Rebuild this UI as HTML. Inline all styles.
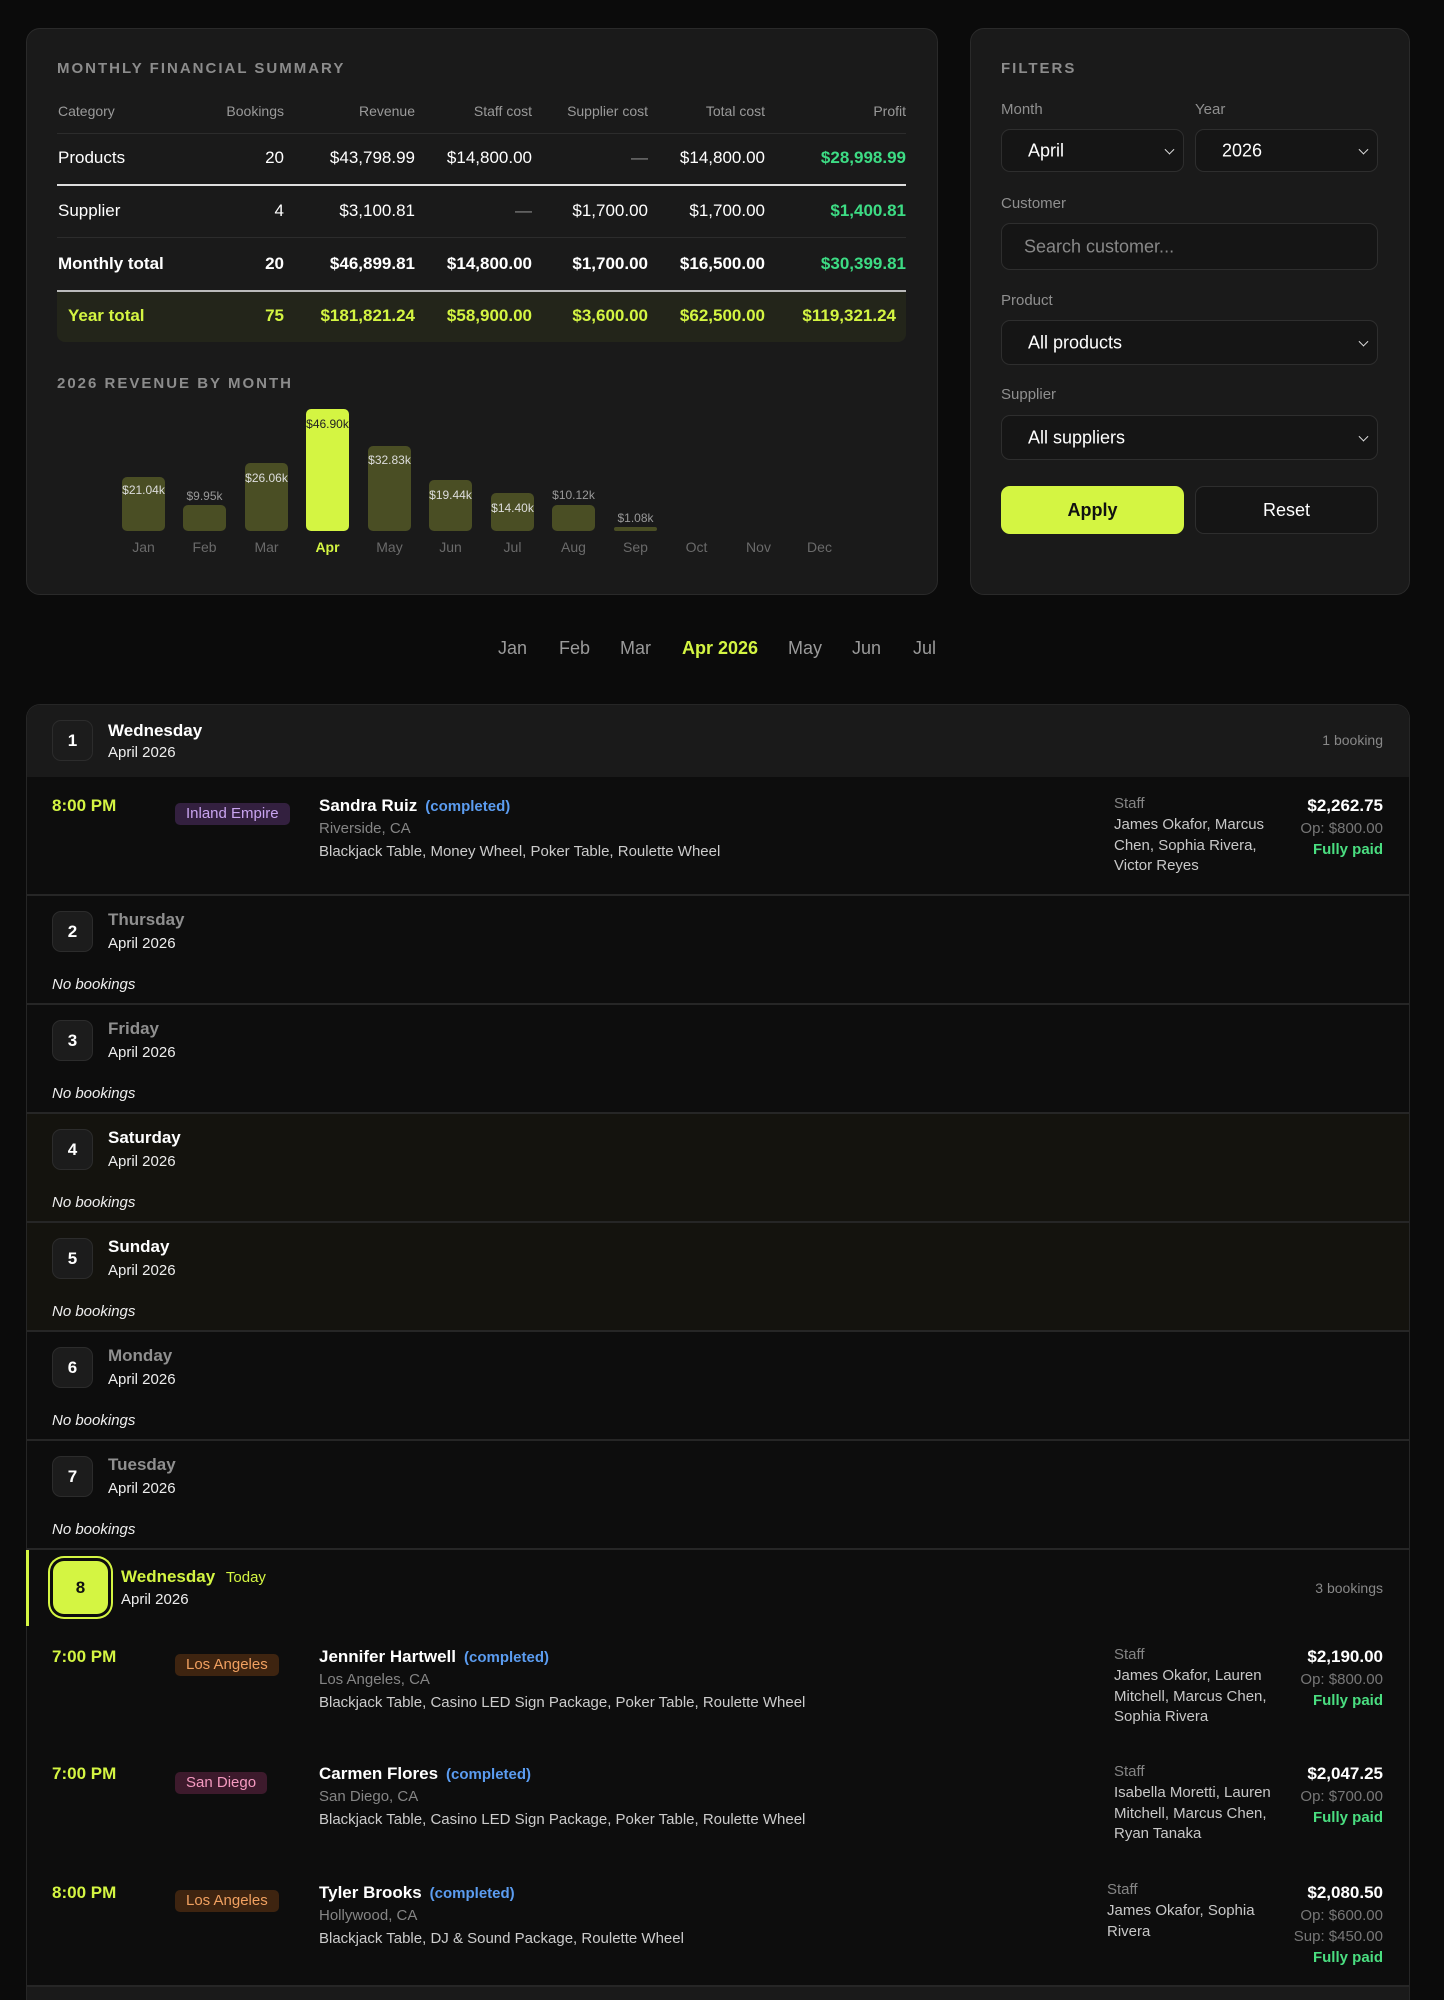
<!DOCTYPE html>
<html><head><meta charset="utf-8"><style>
*{margin:0;padding:0;box-sizing:border-box}
html{width:1444px;height:2000px;overflow:hidden;background:#0b0b0b}
body{width:1444px;height:2000px;background:#0b0b0b;font-family:"Liberation Sans",sans-serif;position:relative;overflow:hidden;color:#fff}
.a{position:absolute;white-space:nowrap;line-height:1.2}
.r{text-align:right}
.card{position:absolute;background:#1a1a1a;border:1px solid #2a2a2a;border-radius:14px}
.ttl{font-size:15px;font-weight:bold;letter-spacing:2px;color:#8c8c8c}
.th{font-size:14px;color:#9a9a9a}
.td{font-size:17px;color:#fff}
.b{font-weight:bold}
.g{color:#3ddc84}
.l{color:#d4f542}
.bar{position:absolute;width:43px;background:#4a4e24;border-radius:5px}
.bl{position:absolute;width:61px;text-align:center;font-size:12px;color:#ddd;line-height:1.2}
.ml{position:absolute;width:61px;text-align:center;font-size:14px;color:#6a6a6a;top:539px}
.flab{font-size:15px;color:#8f8f8f}
.inp{position:absolute;background:#151515;border:1px solid #2e2e2e;border-radius:9px;font-size:18px;color:#fff}
.inp span{position:absolute;left:26px;top:50%;transform:translateY(-50%)}
.chev{position:absolute;right:10px;top:50%;width:7px;height:7px;border-right:1.6px solid #ddd;border-bottom:1.6px solid #ddd;transform:translateY(-70%) rotate(45deg)}
.nav{font-size:18px;color:#9a9a9a}
.box{position:absolute;left:52px;width:41px;height:41px;background:#1c1c1c;border:1px solid #2c2c2c;border-radius:9px;font-size:17px;font-weight:bold;text-align:center;line-height:39px}
.wd{font-size:17px;font-weight:bold;left:108px}
.mo{font-size:15px;left:108px;color:#eee}
.nb{font-size:15px;font-style:italic;left:52px;color:#eee}
.div{position:absolute;left:27px;width:1382px;height:2px;background:#262626}
.time{font-size:17px;font-weight:bold;color:#d4f542;left:52px}
.badge{position:absolute;left:175px;height:22px;border-radius:5px;font-size:15px;line-height:22px;padding:0 11px}
.nm{font-size:17px;font-weight:bold;left:319px}
.nm i{font-style:normal;color:#5b9cf0;font-size:15px;margin-left:8px}
.loc{font-size:15px;color:#858585;left:319px}
.pr{font-size:15px;color:#ccc;left:319px}
.sl{font-size:15px;color:#858585}
.st{font-size:15px;color:#c8c8c8;line-height:20.5px}
.amt{font-size:17px;font-weight:bold;right:61px}
.op{font-size:15px;color:#777;right:61px}
.fp{font-size:15px;font-weight:bold;color:#4ade80;right:61px}
</style></head><body>

<!-- Summary card -->
<div class="card" style="left:26px;top:28px;width:912px;height:567px"></div>
<div class="a ttl" style="left:57px;top:60px">MONTHLY FINANCIAL SUMMARY</div>
<div class="a th" style="left:58px;top:103px">Category</div>
<div class="a th r" style="right:1160px;top:103px">Bookings</div>
<div class="a th r" style="right:1029px;top:103px">Revenue</div>
<div class="a th r" style="right:912px;top:103px">Staff cost</div>
<div class="a th r" style="right:796px;top:103px">Supplier cost</div>
<div class="a th r" style="right:679px;top:103px">Total cost</div>
<div class="a th r" style="right:538px;top:103px">Profit</div>
<div style="position:absolute;left:57px;top:133px;width:849px;height:1px;background:#2c2c2c"></div>

<div class="a td" style="left:58px;top:148px">Products</div>
<div class="a td r" style="right:1160px;top:148px">20</div>
<div class="a td r" style="right:1029px;top:148px">$43,798.99</div>
<div class="a td r" style="right:912px;top:148px">$14,800.00</div>
<div class="a td r" style="right:796px;top:148px;color:#888">—</div>
<div class="a td r" style="right:679px;top:148px">$14,800.00</div>
<div class="a td r b g" style="right:538px;top:148px">$28,998.99</div>
<div style="position:absolute;left:57px;top:184px;width:849px;height:2px;background:#ddd"></div>

<div class="a td" style="left:58px;top:201px">Supplier</div>
<div class="a td r" style="right:1160px;top:201px">4</div>
<div class="a td r" style="right:1029px;top:201px">$3,100.81</div>
<div class="a td r" style="right:912px;top:201px;color:#888">—</div>
<div class="a td r" style="right:796px;top:201px">$1,700.00</div>
<div class="a td r" style="right:679px;top:201px">$1,700.00</div>
<div class="a td r b g" style="right:538px;top:201px">$1,400.81</div>
<div style="position:absolute;left:57px;top:237px;width:849px;height:1px;background:#2c2c2c"></div>

<div class="a td b" style="left:58px;top:254px">Monthly total</div>
<div class="a td b r" style="right:1160px;top:254px">20</div>
<div class="a td b r" style="right:1029px;top:254px">$46,899.81</div>
<div class="a td b r" style="right:912px;top:254px">$14,800.00</div>
<div class="a td b r" style="right:796px;top:254px">$1,700.00</div>
<div class="a td b r" style="right:679px;top:254px">$16,500.00</div>
<div class="a td r b g" style="right:538px;top:254px">$30,399.81</div>
<div style="position:absolute;left:57px;top:290px;width:849px;height:2px;background:#bbb"></div>
<div style="position:absolute;left:57px;top:292px;width:849px;height:50px;background:#23251a;border-radius:0 0 8px 8px"></div>
<div class="a td b l" style="left:68px;top:306px">Year total</div>
<div class="a td b r l" style="right:1160px;top:306px">75</div>
<div class="a td b r l" style="right:1029px;top:306px">$181,821.24</div>
<div class="a td b r l" style="right:912px;top:306px">$58,900.00</div>
<div class="a td b r l" style="right:796px;top:306px">$3,600.00</div>
<div class="a td b r l" style="right:679px;top:306px">$62,500.00</div>
<div class="a td b r l" style="right:548px;top:306px">$119,321.24</div>

<div class="a ttl" style="left:57px;top:375px">2026 REVENUE BY MONTH</div>
<div class="bar" style="left:122px;top:477px;height:54px"></div><div class="bl" style="left:113px;top:483px">$21.04k</div>
<div class="bar" style="left:183px;top:505px;height:26px"></div><div class="bl" style="left:174px;top:489px;color:#999">$9.95k</div>
<div class="bar" style="left:245px;top:463px;height:68px"></div><div class="bl" style="left:236px;top:471px">$26.06k</div>
<div class="bar" style="left:306px;top:409px;height:122px;background:#d4f542"></div><div class="bl" style="left:297px;top:417px;color:#222">$46.90k</div>
<div class="bar" style="left:368px;top:446px;height:85px"></div><div class="bl" style="left:359px;top:453px">$32.83k</div>
<div class="bar" style="left:429px;top:480px;height:51px"></div><div class="bl" style="left:420px;top:488px">$19.44k</div>
<div class="bar" style="left:491px;top:493px;height:38px"></div><div class="bl" style="left:482px;top:501px">$14.40k</div>
<div class="bar" style="left:552px;top:505px;height:26px"></div><div class="bl" style="left:543px;top:488px;color:#999">$10.12k</div>
<div class="bar" style="left:614px;top:527px;height:4px;border-radius:2px"></div><div class="bl" style="left:605px;top:511px;color:#999">$1.08k</div>
<div class="ml" style="left:113px">Jan</div><div class="ml" style="left:174px">Feb</div><div class="ml" style="left:236px">Mar</div>
<div class="ml" style="left:297px;color:#d4f542;font-weight:bold">Apr</div><div class="ml" style="left:359px">May</div><div class="ml" style="left:420px">Jun</div>
<div class="ml" style="left:482px">Jul</div><div class="ml" style="left:543px">Aug</div><div class="ml" style="left:605px">Sep</div>
<div class="ml" style="left:666px">Oct</div><div class="ml" style="left:728px">Nov</div><div class="ml" style="left:789px">Dec</div>

<!-- Filters -->
<div class="card" style="left:970px;top:28px;width:440px;height:567px"></div>
<div class="a ttl" style="left:1001px;top:60px">FILTERS</div>
<div class="a flab" style="left:1001px;top:101px">Month</div>
<div class="a flab" style="left:1195px;top:101px">Year</div>
<div class="inp" style="left:1001px;top:129px;width:183px;height:43px"><span>April</span><i class="chev"></i></div>
<div class="inp" style="left:1195px;top:129px;width:183px;height:43px"><span>2026</span><i class="chev"></i></div>
<div class="a flab" style="left:1001px;top:195px">Customer</div>
<div class="inp" style="left:1001px;top:223px;width:377px;height:47px"><span style="left:22px;color:#888">Search customer...</span></div>
<div class="a flab" style="left:1001px;top:292px">Product</div>
<div class="inp" style="left:1001px;top:320px;width:377px;height:45px"><span>All products</span><i class="chev"></i></div>
<div class="a flab" style="left:1001px;top:386px">Supplier</div>
<div class="inp" style="left:1001px;top:415px;width:377px;height:45px"><span>All suppliers</span><i class="chev"></i></div>
<div style="position:absolute;left:1001px;top:486px;width:183px;height:48px;background:#d4f542;border-radius:9px;color:#111;font-size:18px;font-weight:bold;text-align:center;line-height:48px">Apply</div>
<div style="position:absolute;left:1195px;top:486px;width:183px;height:48px;background:#151515;border:1px solid #2e2e2e;border-radius:9px;color:#fff;font-size:18px;text-align:center;line-height:46px">Reset</div>

<!-- month nav -->
<div class="a nav" style="left:498px;top:638px">Jan</div>
<div class="a nav" style="left:559px;top:638px">Feb</div>
<div class="a nav" style="left:620px;top:638px">Mar</div>
<div class="a nav b" style="left:682px;top:638px;color:#d4f542">Apr 2026</div>
<div class="a nav" style="left:788px;top:638px">May</div>
<div class="a nav" style="left:852px;top:638px">Jun</div>
<div class="a nav" style="left:913px;top:638px">Jul</div>

<!-- list card -->
<div style="position:absolute;left:26px;top:704px;width:1384px;height:1296px;background:#0d0d0d;border:1px solid #262626;border-bottom:none;border-radius:14px 14px 0 0;overflow:hidden">
 <div style="position:absolute;left:0;top:0;width:100%;height:72px;background:#1a1a1a"></div>
 <div style="position:absolute;left:0;top:408px;width:100%;height:218px;background:#14130e"></div>
 <div style="position:absolute;left:0;top:1282px;width:100%;height:40px;background:#1a1a1a"></div>
</div>

<!-- Day 1 -->
<div class="box" style="top:720px">1</div>
<div class="a wd" style="top:721px">Wednesday</div>
<div class="a mo" style="top:744px">April 2026</div>
<div class="a r" style="right:61px;top:732px;font-size:14px;color:#888">1 booking</div>
<div class="a time" style="top:796px">8:00 PM</div>
<div class="badge" style="top:803px;background:#33203f;color:#c9a4f0">Inland Empire</div>
<div class="a nm" style="top:796px">Sandra Ruiz<i>(completed)</i></div>
<div class="a loc" style="top:820px">Riverside, CA</div>
<div class="a pr" style="top:843px">Blackjack Table, Money Wheel, Poker Table, Roulette Wheel</div>
<div class="a sl" style="left:1114px;top:795px">Staff</div>
<div class="a st" style="left:1114px;top:815px">James Okafor, Marcus<br>Chen, Sophia Rivera,<br>Victor Reyes</div>
<div class="a amt" style="top:796px">$2,262.75</div>
<div class="a op" style="top:820px">Op: $800.00</div>
<div class="a fp" style="top:841px">Fully paid</div>
<div class="div" style="top:894px"></div>

<!-- Days 2-7 -->
<div class="box" style="top:911px">2</div><div class="a wd" style="top:910px;color:#8f8f8f">Thursday</div><div class="a mo" style="top:935px">April 2026</div><div class="a nb" style="top:976px">No bookings</div>
<div class="div" style="top:1003px"></div>
<div class="box" style="top:1020px">3</div><div class="a wd" style="top:1019px;color:#8f8f8f">Friday</div><div class="a mo" style="top:1044px">April 2026</div><div class="a nb" style="top:1085px">No bookings</div>
<div class="div" style="top:1112px"></div>
<div class="box" style="top:1129px">4</div><div class="a wd" style="top:1128px">Saturday</div><div class="a mo" style="top:1153px">April 2026</div><div class="a nb" style="top:1194px">No bookings</div>
<div class="div" style="top:1221px"></div>
<div class="box" style="top:1238px">5</div><div class="a wd" style="top:1237px">Sunday</div><div class="a mo" style="top:1262px">April 2026</div><div class="a nb" style="top:1303px">No bookings</div>
<div class="div" style="top:1330px"></div>
<div class="box" style="top:1347px">6</div><div class="a wd" style="top:1346px;color:#8f8f8f">Monday</div><div class="a mo" style="top:1371px">April 2026</div><div class="a nb" style="top:1412px">No bookings</div>
<div class="div" style="top:1439px"></div>
<div class="box" style="top:1456px">7</div><div class="a wd" style="top:1455px;color:#8f8f8f">Tuesday</div><div class="a mo" style="top:1480px">April 2026</div><div class="a nb" style="top:1521px">No bookings</div>
<div class="div" style="top:1548px"></div>

<!-- Day 8 -->
<div style="position:absolute;left:26px;top:1550px;width:3px;height:76px;background:#d4f542"></div>
<div style="position:absolute;left:53px;top:1561px;width:55px;height:53px;background:#d4f542;border-radius:11px;box-shadow:0 0 0 3px #0d0d0d,0 0 0 5px #d4f542;color:#111;font-size:17px;font-weight:bold;text-align:center;line-height:53px">8</div>
<div class="a" style="left:121px;top:1567px;font-size:17px;font-weight:bold;color:#d4f542">Wednesday <span style="font-size:15px;font-weight:normal;margin-left:6px">Today</span></div>
<div class="a" style="left:121px;top:1591px;font-size:15px;color:#eee">April 2026</div>
<div class="a r" style="right:61px;top:1580px;font-size:14px;color:#888">3 bookings</div>

<div class="a time" style="top:1647px">7:00 PM</div>
<div class="badge" style="top:1654px;background:#3e2410;color:#f0a060">Los Angeles</div>
<div class="a nm" style="top:1647px">Jennifer Hartwell<i>(completed)</i></div>
<div class="a loc" style="top:1671px">Los Angeles, CA</div>
<div class="a pr" style="top:1694px">Blackjack Table, Casino LED Sign Package, Poker Table, Roulette Wheel</div>
<div class="a sl" style="left:1114px;top:1646px">Staff</div>
<div class="a st" style="left:1114px;top:1666px">James Okafor, Lauren<br>Mitchell, Marcus Chen,<br>Sophia Rivera</div>
<div class="a amt" style="top:1647px">$2,190.00</div>
<div class="a op" style="top:1671px">Op: $800.00</div>
<div class="a fp" style="top:1692px">Fully paid</div>

<div class="a time" style="top:1764px">7:00 PM</div>
<div class="badge" style="top:1772px;background:#3d1a2c;color:#f59ac0">San Diego</div>
<div class="a nm" style="top:1764px">Carmen Flores<i>(completed)</i></div>
<div class="a loc" style="top:1788px">San Diego, CA</div>
<div class="a pr" style="top:1811px">Blackjack Table, Casino LED Sign Package, Poker Table, Roulette Wheel</div>
<div class="a sl" style="left:1114px;top:1763px">Staff</div>
<div class="a st" style="left:1114px;top:1783px">Isabella Moretti, Lauren<br>Mitchell, Marcus Chen,<br>Ryan Tanaka</div>
<div class="a amt" style="top:1764px">$2,047.25</div>
<div class="a op" style="top:1788px">Op: $700.00</div>
<div class="a fp" style="top:1809px">Fully paid</div>

<div class="a time" style="top:1883px">8:00 PM</div>
<div class="badge" style="top:1890px;background:#3e2410;color:#f0a060">Los Angeles</div>
<div class="a nm" style="top:1883px">Tyler Brooks<i>(completed)</i></div>
<div class="a loc" style="top:1907px">Hollywood, CA</div>
<div class="a pr" style="top:1930px">Blackjack Table, DJ &amp; Sound Package, Roulette Wheel</div>
<div class="a sl" style="left:1107px;top:1881px">Staff</div>
<div class="a st" style="left:1107px;top:1901px">James Okafor, Sophia<br>Rivera</div>
<div class="a amt" style="top:1883px">$2,080.50</div>
<div class="a op" style="top:1907px">Op: $600.00</div>
<div class="a op" style="top:1928px">Sup: $450.00</div>
<div class="a fp" style="top:1949px">Fully paid</div>
<div class="div" style="top:1985px"></div>

</body></html>
